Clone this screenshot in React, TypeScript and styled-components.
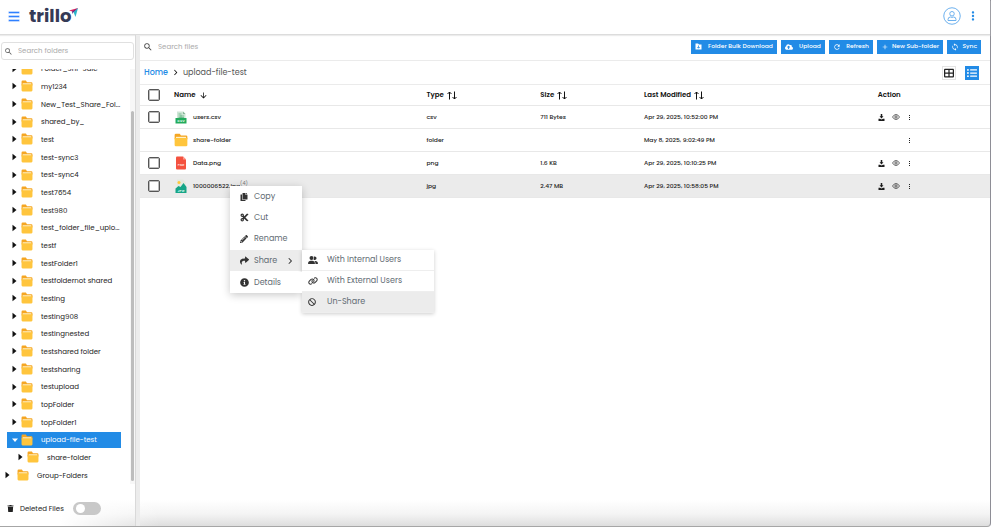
import React from "react";
import styled, { createGlobalStyle, css } from "styled-components";
import {
  FaTrash,
  FaCopy,
  FaPencilAlt,
  FaShare,
  FaInfoCircle,
  FaCloudUploadAlt,
  FaBan,
  FaListUl,
  FaCut,
} from "react-icons/fa";
import { FaUserGroup, FaLink, FaTableCellsLarge, FaAngleRight } from "react-icons/fa6";
import { MdRefresh, MdSync, MdAdd, MdArrowDownward, MdSearch, MdMoreVert } from "react-icons/md";

const GlobalStyle = createGlobalStyle`
  *, *::before, *::after { box-sizing: border-box; }
  body { margin: 0; background: #fff; }
  body, button, input { font-family: Poppins, Inter, "Liberation Sans", sans-serif; }
  button { border: 0; padding: 0; background: none; color: inherit; cursor: pointer; }
  ul { list-style: none; margin: 0; padding: 0; }
  svg { display: block; flex: none; }
`;

const blue = "#228be6";

const Frame = styled.div`
  display: flex;
  flex-direction: column;
  min-height: calc(100vh - 1px);
  margin-right: 1px;
  border-right: 1px solid #8e8e96;
  border-bottom: 1px solid #a6a6a6;
  border-bottom-right-radius: 4px;
  background:
    linear-gradient(to right, #fff 60px, rgba(255, 255, 255, 0) 160px),
    linear-gradient(to top, #dedede, #f4f4f4 12px, #fff 26px);
`;

const Header = styled.header`
  display: flex;
  align-items: center;
  height: 35px;
  padding: 0 10px 2px 9px;
  border-bottom: 1px solid #dcdcdc;
  box-shadow: 0 1px 1px #ececec;
`;

const MenuButton = styled.button`
  display: grid;
  gap: 3px;
  width: 10px;
  margin-right: 10px;
  span { height: 1px; background: #2f80ff; box-shadow: 0 0 0 0.5px #7fb0ff; }
`;

const Logo = styled.a`
  display: flex;
  color: #353a56;
  font-size: 18px;
  font-weight: 700;
  line-height: 34px;
  text-decoration: none;
  svg { margin-top: 9px; margin-left: -2px; }
`;

const HeaderActions = styled.div`
  display: flex;
  align-items: center;
  gap: 5px;
  margin-left: auto;
  color: ${blue};
`;

const Body = styled.div`
  display: flex;
  flex: 1;
`;

const Sidebar = styled.aside`
  display: flex;
  flex-direction: column;
  flex: none;
  width: 140px;
  padding-top: 7px;
  border-right: 4px solid #ececec;
  box-shadow: inset -1px 0 #d9d9d9;
`;

const FolderSearch = styled.label`
  display: flex;
  align-items: center;
  gap: 5px;
  height: 18px;
  margin: 0 2px 0 1px;
  padding-left: 2px;
  border: 1px solid #e0e0e0;
  border-radius: 3px;
  color: #555;
`;

const SearchInput = styled.input`
  flex: 1;
  min-width: 0;
  border: 0;
  padding: 0;
  outline: 0;
  background: transparent;
  font-size: 7px;
  color: #333;
  &::placeholder { color: #aaa; opacity: 1; }
`;

const TreeArea = styled.div`
  display: flex;
  flex: 1;
  margin-top: 9px;
  overflow: hidden;
`;

const Tree = styled.ul`
  display: grid;
  grid-template-columns: minmax(0, 1fr);
  grid-auto-rows: 1fr;
  flex: 1;
  min-width: 0;
  margin-top: -9px;
`;

const ScrollTrack = styled.div`
  width: 5px;
  margin-right: 1px;
  padding-top: 42px;
  background: #f7f7f7;
  display: flex;
  justify-content: center;
`;

const ScrollThumb = styled.div`
  width: 3px;
  margin-bottom: 3px;
  border-radius: 2px;
  background: #bdbdbd;
`;

const TreeRow = styled.li<{ $indent: number; $selected?: boolean; $wide?: boolean }>`
  display: flex;
  align-items: center;
  min-height: 0;
  margin-right: 9px;
  padding-left: ${(p) => p.$indent}px;
  color: #222;
  font-size: 7px;
  line-height: 15px;
  > button { width: 6px; margin-right: ${(p) => (p.$wide ? 6 : 3)}px; color: #111; }
  > span {
    margin-left: 8px;
    white-space: nowrap;
  }
  ${(p) =>
    p.$selected &&
    css`
      margin-left: 7px;
      margin-top: 1px;
      margin-bottom: 1px;
      background: ${blue};
      color: #fff;
      > button { color: #fff; }
    `}
`;

const Deleted = styled.div`
  display: flex;
  align-items: center;
  height: 42px;
  padding: 7px 0 0 7px;
  font-size: 7px;
  color: #222;
  label { display: flex; align-items: center; gap: 9px; margin-left: 6px; white-space: nowrap; }
`;

const Toggle = styled.input`
  appearance: none;
  width: 28px;
  height: 13px;
  margin: 0;
  padding: 2px 3px;
  border-radius: 7px;
  background: #c8c8c8;
  &::before {
    content: "";
    display: block;
    width: 9px;
    height: 9px;
    border-radius: 50%;
    background: #fff;
  }
  &:checked { background: ${blue}; }
  &:checked::before { margin-left: auto; }
`;

const Main = styled.main`
  position: relative;
  flex: 1;
  min-width: 0;
`;

const Toolbar = styled.div`
  display: flex;
  align-items: center;
  gap: 4px;
  height: 26px;
  padding: 0 9px 2px 3px;
  border-bottom: 1px solid #ebebeb;
`;

const FileSearch = styled.label`
  display: flex;
  flex: 1;
  align-items: center;
  gap: 5px;
  color: #444;
`;

const ToolButton = styled.button<{ $min: number }>`
  display: flex;
  align-items: center;
  justify-content: space-between;
  gap: 3px;
  min-width: ${(p) => p.$min}px;
  height: 14px;
  padding: 0 4px;
  background: ${blue};
  color: #fff;
  font-size: 6px;
  font-weight: 500;
  white-space: nowrap;
`;

const Crumbs = styled.nav`
  display: flex;
  align-items: center;
  gap: 4px;
  height: 24px;
  padding: 0 11px 0 4px;
  border-bottom: 1px solid #ebebeb;
  font-size: 8px;
  color: #555;
  a { color: ${blue}; font-weight: 500; text-decoration: none; }
`;

const Views = styled.div`
  display: flex;
  gap: 9px;
  margin-left: auto;
`;

const ViewButton = styled.button<{ $active?: boolean }>`
  display: grid;
  place-items: center;
  width: 14px;
  height: 14px;
  border: 1px solid ${(p) => (p.$active ? blue : "#e4e4e4")};
  background: ${(p) => (p.$active ? blue : "#fff")};
  color: ${(p) => (p.$active ? "#fff" : "#222")};
`;

const Table = styled.table`
  width: 100%;
  table-layout: fixed;
  border-collapse: separate;
  border-spacing: 0;
  font-size: 6px;
  color: #1c1c1c;
  th, td { padding: 0; border-bottom: 1px solid #e8e8e8; text-align: left; white-space: nowrap; }
  th { height: 21px; font-size: 7px; font-weight: 600; color: #111; }
  td { height: 23px; font-weight: 500; }
`;

const Col = styled.col<{ $share: string }>`
  width: ${(p) => p.$share};
`;

const Row = styled.tr<{ $active?: boolean }>`
  background: ${(p) => (p.$active ? "#ebebeb" : "transparent")};
`;

const SortButton = styled.button`
  display: flex;
  align-items: center;
  gap: 3px;
  font-size: 7px;
  font-weight: 600;
`;

const Check = styled.input`
  appearance: none;
  display: block;
  width: 12px;
  height: 12px;
  margin: 0 0 0 8px;
  border: 1px solid #555;
  border-radius: 2px;
  background: #fff;
  box-shadow: inset 0 0 0 1px #bbb;
  &:checked { background: ${blue}; }
`;

const FileName = styled.div`
  display: flex;
  align-items: center;
  gap: 5px;
  > svg { width: 14px; }
  sup { color: #777; font-weight: 400; line-height: 6px; vertical-align: 3px; }
`;

const Actions = styled.div`
  display: grid;
  grid-template-columns: 8px 8px 8px;
  justify-items: center;
  gap: 6px;
  button:last-child { grid-column: 3; }
`;

const Menu = styled.ul`
  position: absolute;
  top: 151px;
  left: 90px;
  width: 72px;
  background: #fff;
  border-radius: 2px;
  box-shadow: 0 2px 8px rgba(0, 0, 0, 0.22);
`;

const SubMenu = styled.ul`
  position: absolute;
  top: 0;
  left: 100%;
  width: 132px;
  background: #fff;
  box-shadow: 0 1px 4px rgba(0, 0, 0, 0.2);
`;

const MenuItem = styled.li<{ $active?: boolean }>`
  position: relative;
  background: ${(p) => (p.$active ? "#ececec" : "#fff")};
  ${(p) => p.$active && css`margin: 1px 0;`}
  > button {
    display: grid;
    grid-template-columns: 9px 1fr auto;
    align-items: center;
    gap: 5px;
    width: 100%;
    height: 21px;
    padding: 0 8px 0 10px;
    font-size: 8px;
    text-align: left;
    color: #5f6b73;
  }
  > button svg { color: #333; }
`;

const SubItem = styled.li<{ $active?: boolean }>`
  background: ${(p) => (p.$active ? "#ececec" : "#fff")};
  border-bottom: 1px solid #eee;
  button {
    display: grid;
    grid-template-columns: 10px 1fr;
    align-items: center;
    gap: 9px;
    width: 100%;
    height: 20px;
    padding: 0 6px;
    font-size: 8px;
    text-align: left;
    color: #5f6b73;
  }
  svg { color: #333; }
`;

const Caret = ({ open }: { open?: boolean }) => (
  <svg width="6" height="8" viewBox="0 0 6 8" fill="currentColor" aria-hidden="true">
    {open ? <path d="M0 2.500h6L3 6z" /> : <path d="M.5.800 4.500 4 .5 7.200z" />}
  </svg>
);

const FolderIcon = ({ size = 12 }: { size?: number }) => (
  <svg width={size} height={size} viewBox="0 0 22 22" aria-hidden="true">
    <path d="M1 3q0-2 2-2h6l2 3h8q2 0 2 2v4H1z" fill="#f5a623" />
    <path d="M3 6h16v4H3z" fill="#fff1c9" />
    <path d="M1 8h20v11q0 2-2 2H3q-2 0-2-2z" fill="#ffc53d" />
  </svg>
);

const BulkIcon = () => (
  <svg width="7" height="7" viewBox="0 0 14 14" aria-hidden="true">
    <path d="M1 1h5l2 2h5v10H1z" fill="#fff" />
    <path d="M7 5v5M4.500 8 7 10.500 9.500 8" fill="none" stroke={blue} strokeWidth="1.600" />
  </svg>
);

const LogoMark = () => (
  <svg width="9" height="9" viewBox="0 0 18 18" aria-hidden="true">
    <path d="M0 5 18 0 10 8z" fill="#e0245e" />
    <path d="M18 0 13 18 9 8z" fill="#2bb5c8" />
    <path d="M18 0 9 8 7 12 6 7z" fill="#5b2a86" />
  </svg>
);

const UserIcon = () => (
  <svg width="18" height="18" viewBox="0 0 36 36" fill="none" stroke="#6db1ee" strokeWidth="2" aria-hidden="true">
    <circle cx="18" cy="18" r="16.500" />
    <circle cx="18" cy="13.500" r="4.500" />
    <path d="M10 27v-2q0-5 5-5 3 1.500 6 0 5 0 5 5v2z" strokeLinejoin="round" />
  </svg>
);

const SortIcon = () => (
  <svg width="10" height="9" viewBox="0 0 20 18" fill="none" stroke="#111" strokeWidth="2" aria-hidden="true">
    <path d="M5 17V2M1 6l4-4 4 4M15 1v15M11 12l4 4 4-4" />
  </svg>
);

const DownloadIcon = () => (
  <svg width="7" height="7" viewBox="0 0 14 14" fill="#1c1c1c" aria-hidden="true">
    <path d="M5.500 0h3v4.500H11L7 9 3 4.500h2.500zM1 9.500h3L7 11l3-1.500h3V14H1z" />
  </svg>
);

const EyeIcon = () => (
  <svg width="8" height="8" viewBox="0 0 16 16" fill="none" stroke="#333" strokeWidth="1.500" aria-hidden="true">
    <path d="M1 8q3-5 7-5t7 5q-3 5-7 5T1 8z" />
    <circle cx="8" cy="8" r="2.300" />
  </svg>
);

const DotsIcon = () => (
  <svg width="7" height="7" viewBox="0 0 7 7" fill="#222" aria-hidden="true">
    <path d="M3 1h1v1H3zM3 3h1v1H3zM3 5h1v1H3z" />
  </svg>
);

const CsvIcon = () => (
  <svg width="14" height="13" viewBox="0 0 28 26" aria-hidden="true">
    <path d="M6 1h12l5 5v10H6z" fill="#cfe6d6" />
    <path d="M18 1v5h5z" fill="#8ab79a" />
    <path d="M9 6h6M9 10h11M9 13h11M14 8v7" stroke="#62b283" strokeWidth="1.500" />
    <path d="M3 14h22v11H3z" fill="#22ab5c" />
    <text x="14" y="22.500" textAnchor="middle" fontSize="7" fontWeight="700" fill="#d9f5e3">CSV</text>
  </svg>
);

const PngIcon = () => (
  <svg width="14" height="14" viewBox="0 0 28 28" aria-hidden="true">
    <path d="M6 1h12l6 6v18q0 2-2 2H6q-2 0-2-2V3q0-2 2-2z" fill="#f4523f" />
    <path d="M18 1v6h6z" fill="#ff9a8c" />
    <text x="14" y="19" textAnchor="middle" fontSize="6" fontWeight="700" fill="#ffd9d3">PNG</text>
  </svg>
);

const JpgIcon = () => (
  <svg width="14" height="14" viewBox="0 0 28 28" aria-hidden="true">
    <path d="M6 1h12l6 6v14H6z" fill="#e4e9df" />
    <circle cx="10" cy="7" r="3" fill="#ffc83d" />
    <path d="m3 19 6-5 4 2 6-8 6 8v12H3z" fill="#16a587" />
    <text x="14" y="25" textAnchor="middle" fontSize="7" fontWeight="700" fill="#c9f2e6">JPG</text>
  </svg>
);

type Node = { name: string; indent?: number; selected?: boolean; wide?: boolean };

const folders: Node[] = [
  ...[
    "Folder_Shr-Sale", "my1234", "New_Test_Share_Fol...", "shared_by_", "test", "test-sync3",
    "test-sync4", "test7654", "test980", "test_folder_file_uplo...", "testf", "testFolder1",
    "testfoldernot shared", "testing", "testing908", "testingnested", "testshared folder",
    "testsharing", "testupload", "topFolder", "topFolder1",
  ].map((name) => ({ name })),
  { name: "upload-file-test", indent: 5, selected: true },
  { name: "share-folder", indent: 18 },
  { name: "Group-Folders", indent: 5, wide: true },
];

const files = [
  { name: "users.csv", type: "csv", size: "711 Bytes", date: "Apr 29, 2025, 10:52:00 PM", icon: <CsvIcon /> },
  { name: "share-folder", type: "folder", size: "", date: "May 8, 2025, 9:02:49 PM", icon: <FolderIcon size={14} /> },
  { name: "Data.png", type: "png", size: "1.6 KB", date: "Apr 29, 2025, 10:10:25 PM", icon: <PngIcon /> },
  { name: "1000006522.jpg", type: "jpg", size: "2.47 MB", date: "Apr 29, 2025, 10:58:05 PM", icon: <JpgIcon />, shares: "(4)", active: true },
];

export default function App() {
  return (
    <>
      <GlobalStyle />
      <Frame>
        <Header>
          <MenuButton aria-label="Menu"><span /><span /><span /></MenuButton>
          <Logo href="#">trillo<LogoMark /></Logo>
          <HeaderActions>
            <button aria-label="Account"><UserIcon /></button>
            <button aria-label="More"><MdMoreVert size={14} /></button>
          </HeaderActions>
        </Header>
        <Body>
          <Sidebar>
            <FolderSearch>
              <MdSearch size={9} />
              <SearchInput placeholder="Search folders" aria-label="Search folders" />
            </FolderSearch>
            <TreeArea>
              <Tree>
                {folders.map((f) => (
                  <TreeRow key={f.name} $indent={f.indent ?? 12} $selected={f.selected} $wide={f.wide}>
                    <button aria-label={`Toggle ${f.name}`}>
                      <Caret open={f.selected} />
                    </button>
                    <FolderIcon />
                    <span>{f.name}</span>
                  </TreeRow>
                ))}
              </Tree>
              <ScrollTrack><ScrollThumb /></ScrollTrack>
            </TreeArea>
            <Deleted>
              <FaTrash size={7} />
              <label>Deleted Files <Toggle type="checkbox" role="switch" /></label>
            </Deleted>
          </Sidebar>
          <Main>
            <Toolbar>
              <FileSearch>
                <MdSearch size={10} />
                <SearchInput placeholder="Search files" aria-label="Search files" />
              </FileSearch>
              <ToolButton $min={86}><BulkIcon />Folder Bulk Download</ToolButton>
              <ToolButton $min={44}><FaCloudUploadAlt size={8} />Upload</ToolButton>
              <ToolButton $min={44}><MdRefresh size={8} />Refresh</ToolButton>
              <ToolButton $min={66}><MdAdd size={8} />New Sub-folder</ToolButton>
              <ToolButton $min={34}><MdSync size={8} />Sync</ToolButton>
            </Toolbar>
            <Crumbs aria-label="Breadcrumb">
              <a href="#">Home</a>
              <FaAngleRight size={7} color="#111" />
              <span>upload-file-test</span>
              <Views>
                <ViewButton aria-label="Grid view"><FaTableCellsLarge size={10} /></ViewButton>
                <ViewButton aria-label="List view" $active><FaListUl size={10} /></ViewButton>
              </Views>
            </Crumbs>
            <Table>
              <colgroup>
                <Col $share="4%" />
                <Col $share="29.7%" />
                <Col $share="13.4%" />
                <Col $share="12.2%" />
                <Col $share="27.5%" />
                <Col $share="13.2%" />
              </colgroup>
              <thead>
                <tr>
                  <th><Check type="checkbox" aria-label="Select all" /></th>
                  <th><SortButton>Name <MdArrowDownward size={9} /></SortButton></th>
                  <th><SortButton>Type <SortIcon /></SortButton></th>
                  <th><SortButton>Size <SortIcon /></SortButton></th>
                  <th><SortButton>Last Modified <SortIcon /></SortButton></th>
                  <th>Action</th>
                </tr>
              </thead>
              <tbody>
                {files.map((f) => (
                  <Row key={f.name} $active={f.active}>
                    <td>{f.type !== "folder" && <Check type="checkbox" aria-label={`Select ${f.name}`} />}</td>
                    <td>
                      <FileName>
                        {f.icon}
                        <span>{f.name}{f.shares && <sup>{f.shares}</sup>}</span>
                      </FileName>
                    </td>
                    <td>{f.type}</td>
                    <td>{f.size}</td>
                    <td>{f.date}</td>
                    <td>
                      <Actions>
                        {f.type !== "folder" && <button aria-label="Download"><DownloadIcon /></button>}
                        {f.type !== "folder" && <button aria-label="Preview"><EyeIcon /></button>}
                        <button aria-label="More"><DotsIcon /></button>
                      </Actions>
                    </td>
                  </Row>
                ))}
              </tbody>
            </Table>
            <Menu>
              <MenuItem><button><FaCopy size={8} />Copy</button></MenuItem>
              <MenuItem><button><FaCut size={9} />Cut</button></MenuItem>
              <MenuItem><button><FaPencilAlt size={8} />Rename</button></MenuItem>
              <MenuItem $active>
                <button><FaShare size={9} />Share<FaAngleRight size={8} /></button>
                <SubMenu>
                  <SubItem><button><FaUserGroup size={10} />With Internal Users</button></SubItem>
                  <SubItem><button><FaLink size={10} />With External Users</button></SubItem>
                  <SubItem $active><button><FaBan size={8} />Un-Share</button></SubItem>
                </SubMenu>
              </MenuItem>
              <MenuItem><button><FaInfoCircle size={9} />Details</button></MenuItem>
            </Menu>
          </Main>
        </Body>
      </Frame>
    </>
  );
}
